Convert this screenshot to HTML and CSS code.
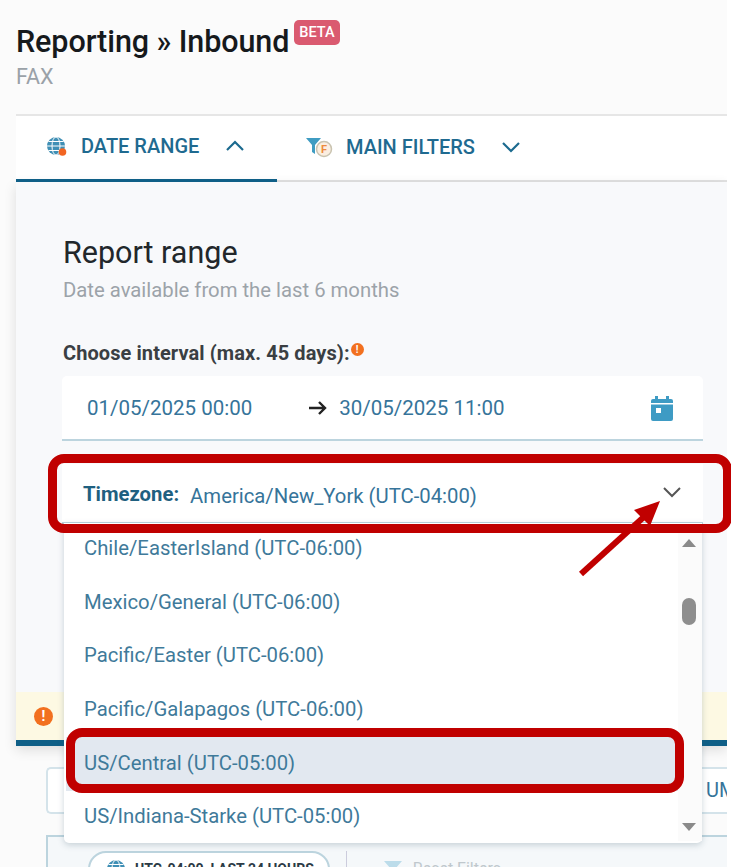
FILE: index.html
```html
<!DOCTYPE html>
<html lang="en">
<head>
<meta charset="utf-8">
<title>Reporting » Inbound</title>
<link rel="stylesheet" href="styles.css">
</head>
<body>
<div class="page">
  <header class="head">
    <div class="title-row">
      <h1 class="title">Reporting » Inbound</h1>
      <span class="beta">BETA</span>
    </div>
    <div class="subtitle">FAX</div>
  </header>

  <nav class="tabs">
    <div class="tab tab-active">
      <svg class="tab-icon" width="22" height="22" viewBox="0 0 22 22"><circle cx="10" cy="11" r="9" fill="#3f8fb5"/><g fill="none" stroke="#fff" stroke-width="1"><ellipse cx="10" cy="11" rx="4" ry="9"/><path d="M1 11h18M2.5 6.5h15M2.500 15.500h15"/></g><circle cx="16.500" cy="17" r="3.800" fill="#f26522"/></svg>
      <span>DATE RANGE</span>
      <svg class="tab-chev" width="20" height="12" viewBox="0 0 20 12"><path d="M2 10l8-8 8 8" fill="none" stroke="#1b6a8f" stroke-width="2.200"/></svg>
    </div>
    <div class="tab">
      <svg class="tab-icon" width="28" height="24" viewBox="0 0 28 24"><path d="M1 3h15l-6 7v9l-3-2v-7z" fill="#3f9cc2"/><circle cx="19" cy="14" r="7.500" fill="#fbeee0" stroke="#c9c3b0" stroke-width="1.500"/><text x="19" y="18" class="tab-f">F</text></svg>
      <span>MAIN FILTERS</span>
      <svg class="tab-chev" width="20" height="12" viewBox="0 0 20 12"><path d="M2 2l8 8 8-8" fill="none" stroke="#1b6a8f" stroke-width="2.200"/></svg>
    </div>
  </nav>

  <section class="panel">
    <div class="panel-body">
      <h2 class="range-title">Report range</h2>
      <p class="range-sub">Date available from the last 6 months</p>
      <div class="interval-label">Choose interval (max. 45 days):<span class="dot">!</span></div>
      <div class="date-field">
        <span class="date-from">01/05/2025 00:00</span>
        <svg class="date-arrow" width="20" height="14" viewBox="0 0 20 14"><path d="M1 7h16M11 1l6 6-6 6" fill="none" stroke="#222" stroke-width="2.400"/></svg>
        <span class="date-to">30/05/2025 11:00</span>
        <svg class="cal" width="24" height="26" viewBox="0 0 24 26"><path d="M1 6a2 2 0 0 1 2-2h2V1h3v3h8V1h3v3h2a2 2 0 0 1 2 2v18a2 2 0 0 1-2 2H3a2 2 0 0 1-2-2z" fill="#3e9bc4"/><rect x="1" y="8" width="22" height="1.500" fill="#fff"/><rect x="6" y="13" width="5" height="5" fill="#fff"/></svg>
      </div>
      <div class="tz-field">
        <span class="tz-label">Timezone:</span>
        <span class="tz-value">America/New_York (UTC-04:00)</span>
        <svg class="tz-chev" width="20" height="12" viewBox="0 0 20 12"><path d="M2 2l8 8 8-8" fill="none" stroke="#555" stroke-width="2"/></svg>
      </div>
    </div>
    <div class="notice"><span class="notice-dot">!</span></div>
  </section>

  <div class="filter-input">UM</div>

  <div class="chip-row">
    <span class="chip">
      <svg width="20" height="20" viewBox="0 0 20 20"><circle cx="10" cy="10" r="9" fill="#3f8fb5"/><g fill="none" stroke="#fff"><ellipse cx="10" cy="10" rx="4" ry="9"/><path d="M1 10h18M2.500 5.500h15"/></g></svg>
      UTC-04:00, LAST 24 HOURS
    </span>
    <span class="chip-sep"></span>
    <span class="reset">
      <svg width="20" height="18" viewBox="0 0 20 18"><path d="M1 1h18l-7 8v8l-4-2V9z" fill="#bcdcea"/></svg>
      Reset Filters
    </span>
  </div>

  <ul class="tz-list">
    <li class="tz-item">Chile/EasterIsland (UTC-06:00)</li>
    <li class="tz-item">Mexico/General (UTC-06:00)</li>
    <li class="tz-item">Pacific/Easter (UTC-06:00)</li>
    <li class="tz-item">Pacific/Galapagos (UTC-06:00)</li>
    <li class="tz-item tz-selected">US/Central (UTC-05:00)</li>
    <li class="tz-item">US/Indiana-Starke (UTC-05:00)</li>
  </ul>
  <div class="scroll">
    <span class="scroll-up"></span>
    <span class="scroll-thumb"></span>
    <span class="scroll-down"></span>
  </div>
</div>

<div class="mark mark-tz"></div>
<div class="mark mark-item"></div>
<svg class="mark-arrow" width="90" height="80" viewBox="0 0 90 80"><path d="M3 76L68 17" stroke="#c00000" stroke-width="6" fill="none"/><path d="M82 3L72 28 56 12z" fill="#c00000"/></svg>
</body>
</html>
```
FILE: styles.css
```css
* { box-sizing: border-box; }
html, body { margin: 0; padding: 0; background: #fff; }
body {
  position: relative;
  width: 731px;
  height: 867px;
  overflow: hidden;
  font-family: Roboto, "Liberation Sans", sans-serif;
}
.page {
  position: relative;
  width: 727px;
  height: 867px;
  overflow: hidden;
  padding-left: 16px;
  background: #fbfbfb;
}
.head { height: 114px; padding-top: 23px; }
.title-row { display: flex; align-items: flex-start; }
.title { margin: 0; font-size: 30.500px; line-height: 38px; font-weight: 500; color: #16191c; letter-spacing: -0.08px; }
.beta {
  margin: -3px 0 0 5px;
  height: 25px;
  padding: 0 5px;
  border-radius: 5px;
  background: #da5a70;
  color: #fff;
  font-size: 14.500px;
  line-height: 25px;
  font-weight: 500;
}
.subtitle { font-size: 21.500px; line-height: 24px; margin-top: 4px; color: #9aa1a8; }
.tabs {
  display: flex;
  height: 68px;
  background: #fff;
  border-top: 2px solid #e6e6e6;
  border-bottom: 2px solid #e2e2e2;
}
.tab {
  display: flex;
  align-items: center;
  height: 66px;
  color: #1f6a90;
  font-size: 20px;
  font-weight: 500;
  padding-bottom: 4px;
}
.tab-active { width: 261px; padding-left: 30px; border-bottom: 3px solid #0f5f87; }
.tab:not(.tab-active) { padding-left: 28px; }
.tab-icon { margin-right: 13px; flex: none; }
.tab-chev { margin-left: 26px; flex: none; }
.tab-f { font-size: 11px; font-weight: 700; fill: #ee8a3c; text-anchor: middle; font-family: Roboto, sans-serif; }
.panel {
  background: #f8f9fb;
  height: 564px;
  box-shadow: 0 4px 12px rgba(0, 0, 0, 0.12);
  display: flex;
  flex-direction: column;
  justify-content: space-between;
}
.panel-body { padding: 53px 24px 0 47px; }
.range-title { margin: 0; font-size: 30.500px; line-height: 36px; font-weight: 400; color: #22272b; }
.range-sub { margin: 3px 0 0; font-size: 20.300px; line-height: 32px; color: #9ca3a9; }
.interval-label { margin-top: 35px; font-size: 20px; line-height: 24px; font-weight: 700; letter-spacing: 0.08px; color: #3a3f43; }
.dot {
  display: inline-block;
  width: 13px;
  height: 13px;
  margin-left: 1px;
  border-radius: 50%;
  background: #f2701f;
  color: #fff;
  font-size: 10px;
  line-height: 13px;
  text-align: center;
  vertical-align: 7px;
}
.date-field {
  display: flex;
  align-items: center;
  height: 65px;
  margin-top: 11px;
  margin-left: -1px;
  padding: 0 29px 0 25px;
  background: #fff;
  border-radius: 5px 5px 0 0;
  border-bottom: 2px solid #bcd4de;
  color: #36749a;
  font-size: 20.500px;
}
.date-arrow { margin-left: 56px; margin-right: 11px; flex: none; }
.cal { margin-left: auto; flex: none; }
.tz-field {
  display: flex;
  align-items: center;
  height: 60px;
  margin-top: 23px;
  margin-left: -1px;
  padding: 5px 21px 0;
  background: #fff;
  border-bottom: 2px solid #bcd4de;
  font-size: 20.300px;
  color: #36749a;
}
.tz-label { font-size: 20.300px; font-weight: 700; color: #1f6080; margin-right: 11px; margin-top: -3px; }
.tz-chev { margin-left: auto; margin-top: -8px; flex: none; }
.notice {
  height: 54px;
  padding-left: 18px;
  display: flex;
  align-items: center;
  background: #fdf9e3;
  border-bottom: 6px solid #0f5f87;
}
.notice-dot {
  width: 19px;
  height: 19px;
  border-radius: 50%;
  background: #f2701f;
  color: #fff;
  font-weight: 700;
  font-size: 14px;
  line-height: 19px;
  text-align: center;
}
.filter-input {
  width: 681px;
  height: 47px;
  margin: 21px 0 0 30px;
  padding-left: 658px;
  background: #fff;
  border: 2px solid #d4e3ea;
  border-right: 0;
  border-radius: 5px 0 0 5px;
  color: #36749a;
  font-size: 20px;
  line-height: 43px;
  white-space: nowrap;
  overflow: hidden;
}
.chip-row {
  display: flex;
  align-items: flex-start;
  gap: 16px;
  width: 681px;
  height: 60px;
  margin: 21px 0 0 30px;
  padding: 14px 0 0 40px;
  background: #f5f8fa;
  border: 2px solid #bcd4de;
  border-width: 2px 0 0 2px;
}
.chip {
  display: flex;
  align-items: center;
  gap: 9px;
  height: 36px;
  padding: 0 14px 0 16px;
  border: 2px solid #bcd4de;
  border-radius: 18px;
  background: #fff;
  font-size: 14px;
  font-weight: 700;
  color: #2b3b46;
}
.chip-sep { width: 1px; height: 32px; background: #ccd; }
.reset {
  display: flex;
  align-items: center;
  gap: 10px;
  margin: 8px 0 0 20px;
  font-size: 16px;
  color: #c0c8cd;
}
.tz-list {
  position: absolute;
  left: 64px;
  top: 523px;
  width: 638px;
  height: 320px;
  margin: 0;
  padding: 0;
  list-style: none;
  background: #fff;
  border-radius: 0 0 5px 5px;
  box-shadow: 0 2px 6px rgba(60, 90, 110, 0.25);
}
.tz-item {
  height: 53.600px;
  padding: 0 0 3px 20px;
  display: flex;
  align-items: center;
  font-size: 20.300px;
  color: #3f7a9a;
}
.tz-selected { width: 620px; margin-left: 2px; padding-left: 18px; background: #e2e8f0; }
.scroll {
  position: absolute;
  left: 678px;
  top: 531px;
  width: 24px;
  height: 310px;
  background: #fbfbfb;
}
.scroll-up, .scroll-down, .scroll-thumb { position: absolute; left: 4px; }
.scroll-up {
  top: 8px;
  width: 0;
  height: 0;
  border-left: 7px solid transparent;
  border-right: 7px solid transparent;
  border-bottom: 8px solid #8a8a8a;
}
.scroll-down {
  top: 292px;
  width: 0;
  height: 0;
  border-left: 7px solid transparent;
  border-right: 7px solid transparent;
  border-top: 8px solid #8a8a8a;
}
.scroll-thumb {
  top: 67px;
  width: 14px;
  height: 27px;
  border-radius: 7px;
  background: #8e8e8e;
}
.mark {
  position: absolute;
  border: 9px solid #c00000;
  border-radius: 16px;
}
.mark-tz { left: 48px; top: 454px; width: 684px; height: 79px; }
.mark-item { left: 66px; top: 728px; width: 618px; height: 65px; }
.mark-arrow { position: absolute; left: 578px; top: 498px; }
```
